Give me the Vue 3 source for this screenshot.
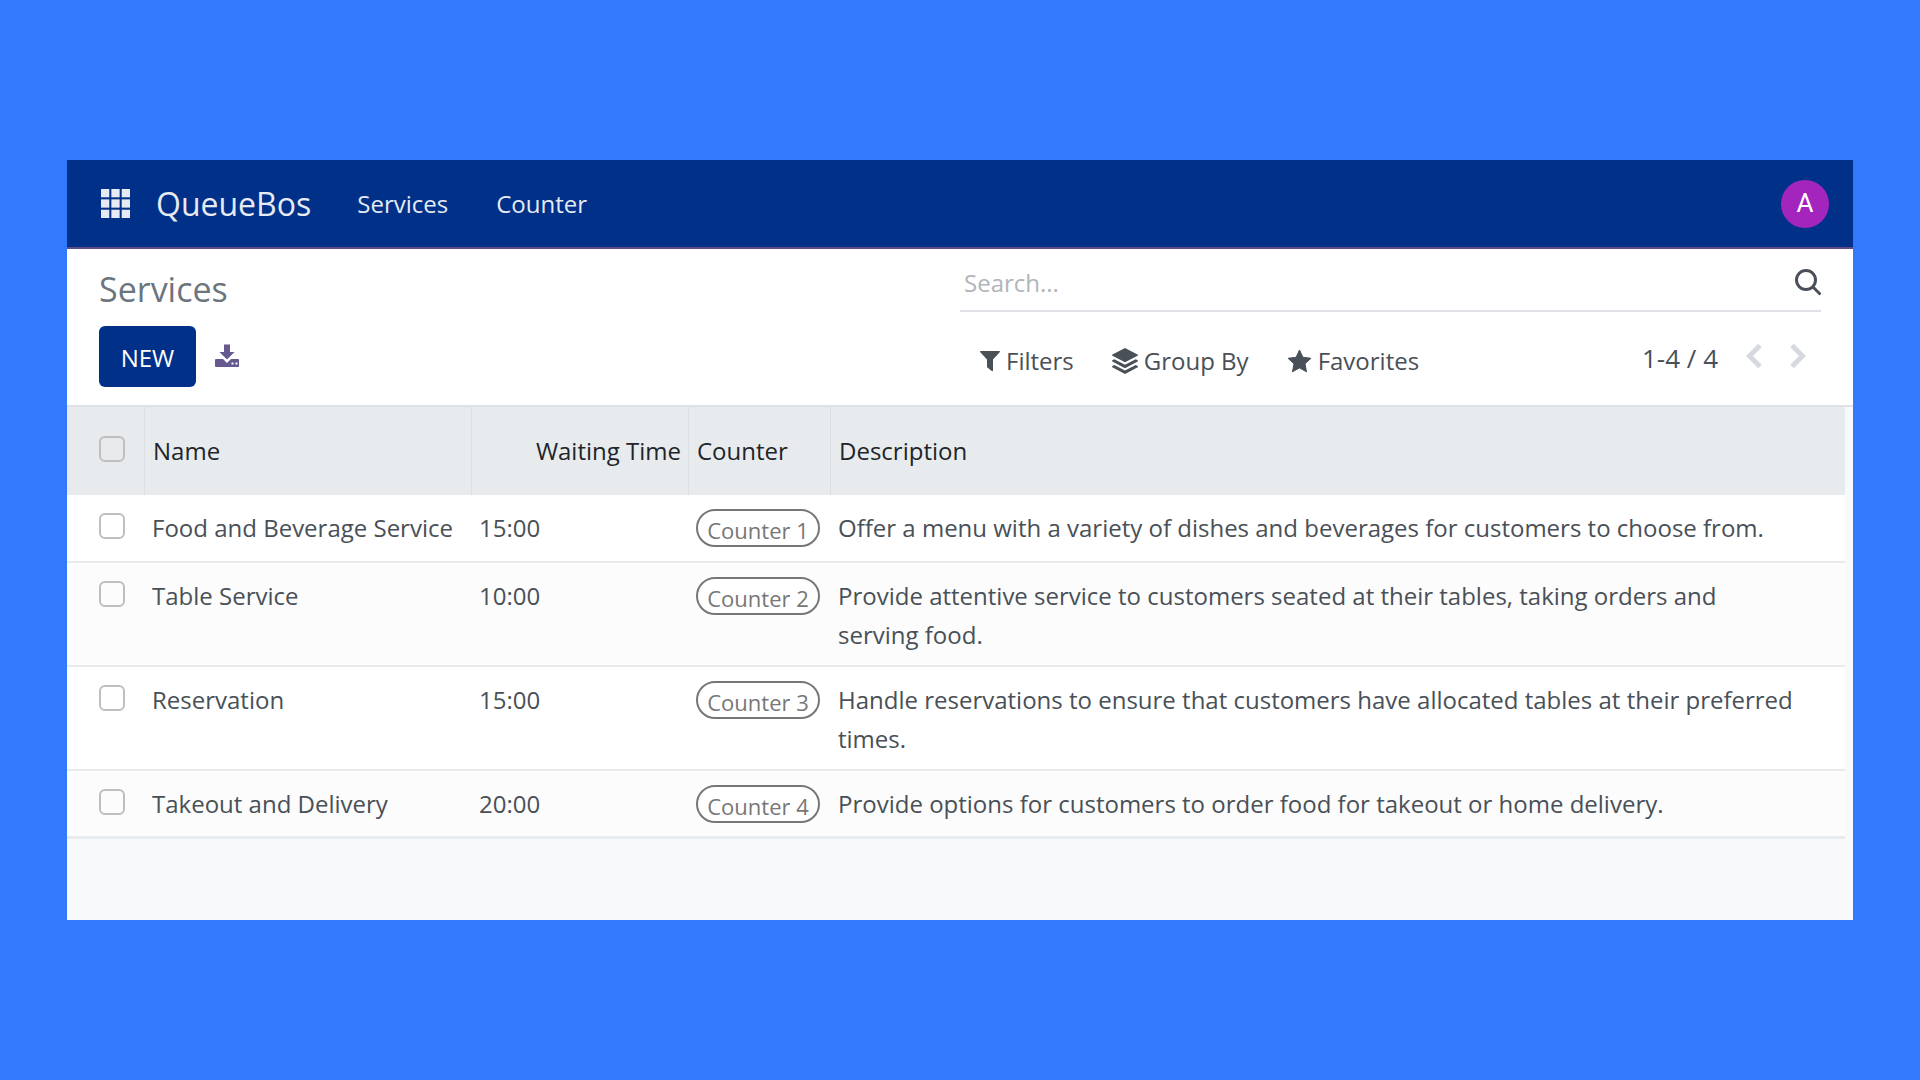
<script setup>
import { ref, computed } from 'vue'

const search = ref('')
const selected = ref([])

const services = [
  { id: 1, name: 'Food and Beverage Service', time: '15:00', counter: 'Counter 1', description: 'Offer a menu with a variety of dishes and beverages for customers to choose from.' },
  { id: 2, name: 'Table Service', time: '10:00', counter: 'Counter 2', description: 'Provide attentive service to customers seated at their tables, taking orders and serving food.' },
  { id: 3, name: 'Reservation', time: '15:00', counter: 'Counter 3', description: 'Handle reservations to ensure that customers have allocated tables at their preferred times.' },
  { id: 4, name: 'Takeout and Delivery', time: '20:00', counter: 'Counter 4', description: 'Provide options for customers to order food for takeout or home delivery.' },
]

const allSelected = computed({
  get: () => selected.value.length === services.length,
  set: (on) => { selected.value = on ? services.map((s) => s.id) : [] },
})
</script>

<template>
  <div class="page">
    <div class="window">
      <header class="navbar">
        <button class="apps" type="button" aria-label="Applications">
          <svg width="29" height="29" viewBox="0 0 28 28" fill="currentColor">
            <template v-for="row in 3" :key="row">
              <rect v-for="col in 3" :key="col" :x="(col - 1) * 10" :y="(row - 1) * 10" width="8" height="8" />
            </template>
          </svg>
        </button>
        <a class="brand" href="#">QueueBos</a>
        <nav class="menu">
          <a href="#services">Services</a>
          <a href="#counter">Counter</a>
        </nav>
        <button class="avatar" type="button" aria-label="User menu">A</button>
      </header>

      <section class="panel">
        <div class="panel-left">
          <h1>Services</h1>
          <div class="actions">
            <button class="new" type="button">NEW</button>
            <button class="export" type="button" aria-label="Export all">
              <svg width="24" height="24" viewBox="0 0 24 24" fill="currentColor">
                <path d="M9 0.500h6v7.500h4.500L12 15.500 4.500 8H9z" />
                <path fill-rule="evenodd" d="M1 15h7l4 4 4-4h7a1 1 0 0 1 1 1v6a1 1 0 0 1-1 1H1a1 1 0 0 1-1-1v-6a1 1 0 0 1 1-1zM16.500 18.500v2h2v-2zM20.500 18.500v2h2v-2z" />
              </svg>
            </button>
          </div>
        </div>

        <div class="panel-right">
          <label class="search">
            <input v-model="search" type="text" placeholder="Search..." aria-label="Search" />
            <svg width="27" height="27" viewBox="0 0 27 27" fill="none" stroke="currentColor" stroke-width="3">
              <circle cx="12" cy="11" r="9.500" />
              <path d="M18.500 17.500l8 8" />
            </svg>
          </label>
          <div class="tools">
            <div class="filters">
              <button type="button">
                <svg width="20" height="22" viewBox="0 0 20 22" fill="currentColor">
                  <path d="M0.500 1h19q.8.500.2 1.200L13 9.500V20.500q-.3 1-1.200.5L7.300 17.500Q7 17 7 16.500v-7L.3 2.200Q-.2 1.400.5 1z" />
                </svg>
                Filters
              </button>
              <button type="button">
                <svg width="26" height="26" viewBox="0 0 26 26" fill="currentColor">
                  <path d="M13 0l12.500 6.500q.8.700 0 1.300L13 14.300.5 7.800q-.8-.6 0-1.300z" />
                  <path d="M.3 12.200l2-1L13 16.800l10.700-5.600 2 1q.5.700 0 1.200L13 20.200.3 13.400q-.5-.5 0-1.200z" />
                  <path d="M.3 18l2-1L13 22.600 23.700 17l2 1q.5.700 0 1.200L13 26 .3 19.200q-.5-.5 0-1.200z" />
                </svg>
                Group By
              </button>
              <button type="button">
                <svg width="25" height="24" viewBox="0 0 25 24" fill="currentColor" stroke="currentColor" stroke-linejoin="round">
                  <path d="M12.500 1l3.400 7.300 8 1-5.900 5.500 1.500 8-7-3.900-7 3.900 1.500-8L1.100 9.300l8-1z" />
                </svg>
                Favorites
              </button>
            </div>
            <div class="pager">
              <span>1-4 / 4</span>
              <button type="button" aria-label="Previous">
                <svg width="16" height="26" viewBox="0 0 16 26" fill="none" stroke="currentColor" stroke-width="5">
                  <path d="M14 2.500L3.500 13 14 23.500" />
                </svg>
              </button>
              <button type="button" aria-label="Next">
                <svg width="16" height="26" viewBox="0 0 16 26" fill="none" stroke="currentColor" stroke-width="5">
                  <path d="M2 2.500L12.500 13 2 23.500" />
                </svg>
              </button>
            </div>
          </div>
        </div>
      </section>

      <main class="content">
        <table>
          <colgroup>
            <col class="col-check" />
            <col class="col-name" />
            <col class="col-time" />
            <col class="col-counter" />
            <col />
          </colgroup>
          <thead>
            <tr>
              <th class="check"><input v-model="allSelected" type="checkbox" aria-label="Select all" /></th>
              <th>Name</th>
              <th class="right">Waiting Time</th>
              <th>Counter</th>
              <th>Description</th>
            </tr>
          </thead>
          <tbody>
            <tr v-for="s in services" :key="s.id">
              <td class="check"><input v-model="selected" type="checkbox" :value="s.id" :aria-label="'Select ' + s.name" /></td>
              <td class="name">{{ s.name }}</td>
              <td>{{ s.time }}</td>
              <td class="tag-cell"><span class="tag">{{ s.counter }}</span></td>
              <td class="description">{{ s.description }}</td>
            </tr>
          </tbody>
        </table>
      </main>
    </div>
  </div>
</template>

<style>
body {
  margin: 0;
}
</style>

<style scoped>
* {
  box-sizing: border-box;
}

.page {
  display: flex;
  min-height: 100vh;
  padding: 160px 67px;
  background: #3279fd;
  color: #495057;
  font: 24px/39px "Open Sans", "Noto Sans", sans-serif;
}

button,
input {
  margin: 0;
  padding: 0;
  border: 0;
  background: none;
  color: inherit;
  font: inherit;
}

button {
  display: flex;
  align-items: center;
  cursor: pointer;
}

a {
  color: inherit;
  text-decoration: none;
}

svg {
  display: block;
  flex: none;
}

.window {
  display: flex;
  flex: 1;
  flex-direction: column;
  min-width: 0;
  background: #f8f9fb;
}

.navbar {
  display: flex;
  align-items: center;
  height: 89px;
  padding: 0 24px 0 34px;
  border-bottom: 2px solid #5f4b86;
  background: #003087;
  color: #e5eaf3;
}

.brand {
  margin-left: 26px;
  font-size: 32px;
}

.menu {
  display: flex;
  gap: 48px;
  margin-left: 46px;
}

.avatar {
  justify-content: center;
  width: 48px;
  height: 48px;
  margin-left: auto;
  border-radius: 50%;
  background: #a325bd;
  color: #fff;
  font-family: Roboto, sans-serif;
  font-size: 26px;
}

.panel {
  display: flex;
  padding: 1px 32px 0;
  border-bottom: 2px solid #dee2e6;
  background: #fff;
}

.panel-left,
.panel-right {
  flex: 1;
  min-width: 0;
}

.panel-left {
  padding: 15px 0 18px;
}

h1 {
  margin: 0 0 13px;
  color: #6c757d;
  font-size: 34px;
  font-weight: 400;
  line-height: 48px;
}

.actions {
  display: flex;
  align-items: center;
  gap: 19px;
}

.new {
  justify-content: center;
  width: 97px;
  height: 61px;
  padding-top: 2px;
  border-radius: 6px;
  background: #003087;
  color: #fff;
}

.export {
  padding-bottom: 2px;
  color: #66598f;
}

.search {
  display: flex;
  align-items: center;
  height: 62px;
  padding: 5px 0 0 4px;
  border-bottom: 2px solid #dee2e6;
}

.search input {
  flex: 1;
  min-width: 0;
  outline: 0;
}

.search input::placeholder {
  color: #b0b5b9;
  opacity: 1;
}

.tools {
  display: flex;
  align-items: center;
  justify-content: space-between;
  height: 93px;
  padding: 0 15px 0 20px;
}

.filters {
  display: flex;
  gap: 38px;
  padding-top: 4px;
}

.filters button {
  gap: 6px;
}

.pager {
  display: flex;
  align-items: flex-start;
  gap: 28px;
  font-size: 26px;
}

.pager button {
  padding-top: 4px;
  color: #d6d9dd;
}

.content {
  flex: 1;
  padding-right: 8px;
}

table {
  width: 100%;
  border-collapse: separate;
  border-spacing: 0;
  table-layout: fixed;
}

.col-check {
  width: 78px;
}

.col-name {
  width: 327px;
}

.col-time {
  width: 217px;
}

.col-counter {
  width: 142px;
}

th {
  height: 88px;
  padding: 0 7px 2px 8px;
  border-right: 1px solid #dbdfe3;
  background: #e7ebee;
  color: #212529;
  font-weight: 400;
  text-align: left;
}

th:last-child {
  border-right: 0;
}

th.right {
  text-align: right;
}

td {
  height: 68px;
  padding: 13px 7px 11px;
  border-bottom: 2px solid #e7ebee;
  background: #fff;
  vertical-align: top;
}

tbody tr:nth-child(even) td {
  background: #fcfcfc;
}

tbody tr:last-child td {
  border-bottom-width: 3px;
}

.name {
  white-space: nowrap;
}

td.description {
  padding-right: 48px;
}

.check {
  padding-left: 32px;
}

th.check {
  padding-bottom: 4px;
}

td.check {
  padding-top: 18px;
}

.check input {
  display: block;
  width: 26px;
  height: 26px;
  border: 2px solid #bfbfbf;
  border-radius: 6px;
  appearance: none;
}

.check input:checked {
  background: #003087;
}

td.tag-cell {
  padding: 14px 7px 0;
}

.tag {
  display: block;
  width: 124px;
  height: 38px;
  border: 2px solid #777;
  border-radius: 19px;
  background: #fff;
  color: #777;
  font-size: 22px;
  line-height: 38px;
  text-align: center;
  white-space: nowrap;
}
</style>
